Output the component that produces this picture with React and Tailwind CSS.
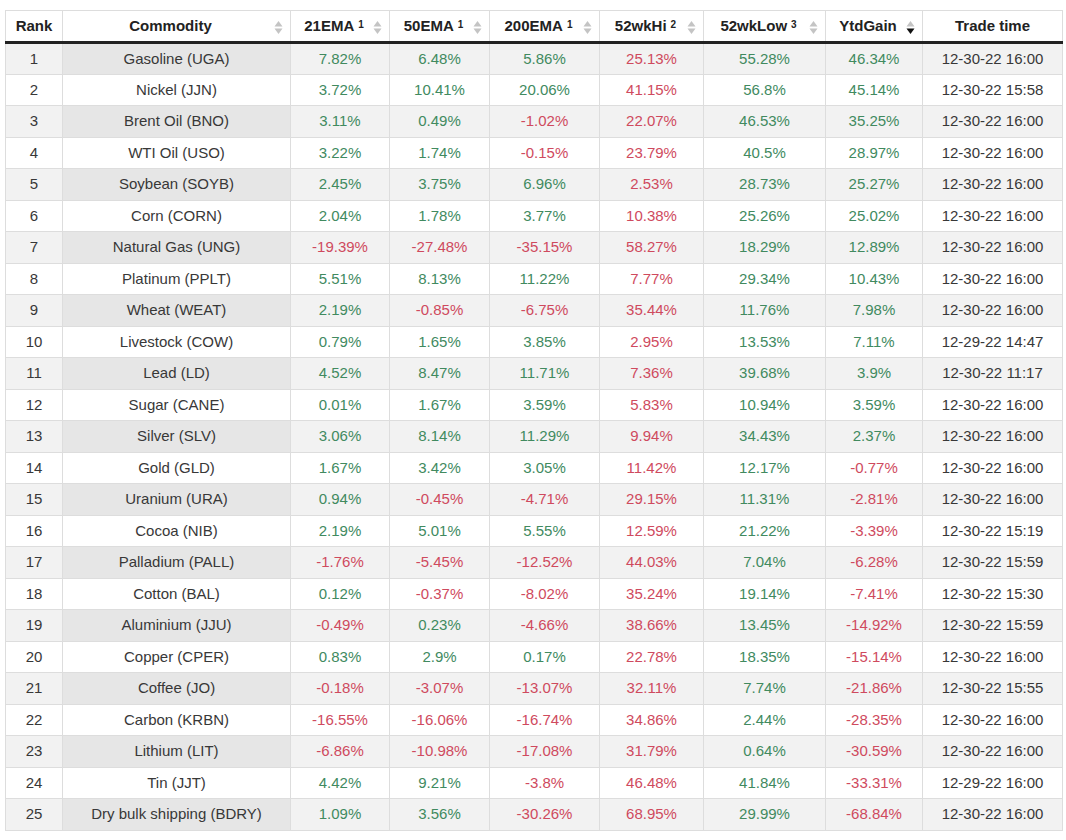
import React from "react";

const rows = [
  ["Gasoline (UGA)", "7.82%", "6.48%", "5.86%", "25.13%", "55.28%", "46.34%", "12-30-22 16:00"],
  ["Nickel (JJN)", "3.72%", "10.41%", "20.06%", "41.15%", "56.8%", "45.14%", "12-30-22 15:58"],
  ["Brent Oil (BNO)", "3.11%", "0.49%", "-1.02%", "22.07%", "46.53%", "35.25%", "12-30-22 16:00"],
  ["WTI Oil (USO)", "3.22%", "1.74%", "-0.15%", "23.79%", "40.5%", "28.97%", "12-30-22 16:00"],
  ["Soybean (SOYB)", "2.45%", "3.75%", "6.96%", "2.53%", "28.73%", "25.27%", "12-30-22 16:00"],
  ["Corn (CORN)", "2.04%", "1.78%", "3.77%", "10.38%", "25.26%", "25.02%", "12-30-22 16:00"],
  ["Natural Gas (UNG)", "-19.39%", "-27.48%", "-35.15%", "58.27%", "18.29%", "12.89%", "12-30-22 16:00"],
  ["Platinum (PPLT)", "5.51%", "8.13%", "11.22%", "7.77%", "29.34%", "10.43%", "12-30-22 16:00"],
  ["Wheat (WEAT)", "2.19%", "-0.85%", "-6.75%", "35.44%", "11.76%", "7.98%", "12-30-22 16:00"],
  ["Livestock (COW)", "0.79%", "1.65%", "3.85%", "2.95%", "13.53%", "7.11%", "12-29-22 14:47"],
  ["Lead (LD)", "4.52%", "8.47%", "11.71%", "7.36%", "39.68%", "3.9%", "12-30-22 11:17"],
  ["Sugar (CANE)", "0.01%", "1.67%", "3.59%", "5.83%", "10.94%", "3.59%", "12-30-22 16:00"],
  ["Silver (SLV)", "3.06%", "8.14%", "11.29%", "9.94%", "34.43%", "2.37%", "12-30-22 16:00"],
  ["Gold (GLD)", "1.67%", "3.42%", "3.05%", "11.42%", "12.17%", "-0.77%", "12-30-22 16:00"],
  ["Uranium (URA)", "0.94%", "-0.45%", "-4.71%", "29.15%", "11.31%", "-2.81%", "12-30-22 16:00"],
  ["Cocoa (NIB)", "2.19%", "5.01%", "5.55%", "12.59%", "21.22%", "-3.39%", "12-30-22 15:19"],
  ["Palladium (PALL)", "-1.76%", "-5.45%", "-12.52%", "44.03%", "7.04%", "-6.28%", "12-30-22 15:59"],
  ["Cotton (BAL)", "0.12%", "-0.37%", "-8.02%", "35.24%", "19.14%", "-7.41%", "12-30-22 15:30"],
  ["Aluminium (JJU)", "-0.49%", "0.23%", "-4.66%", "38.66%", "13.45%", "-14.92%", "12-30-22 15:59"],
  ["Copper (CPER)", "0.83%", "2.9%", "0.17%", "22.78%", "18.35%", "-15.14%", "12-30-22 16:00"],
  ["Coffee (JO)", "-0.18%", "-3.07%", "-13.07%", "32.11%", "7.74%", "-21.86%", "12-30-22 15:55"],
  ["Carbon (KRBN)", "-16.55%", "-16.06%", "-16.74%", "34.86%", "2.44%", "-28.35%", "12-30-22 16:00"],
  ["Lithium (LIT)", "-6.86%", "-10.98%", "-17.08%", "31.79%", "0.64%", "-30.59%", "12-30-22 16:00"],
  ["Tin (JJT)", "4.42%", "9.21%", "-3.8%", "46.48%", "41.84%", "-33.31%", "12-29-22 16:00"],
  ["Dry bulk shipping (BDRY)", "1.09%", "3.56%", "-30.26%", "68.95%", "29.99%", "-68.84%", "12-30-22 16:00"],
];

const SortIcon = ({ desc }) => (
  <svg width="9" height="15" viewBox="0 0 9 15" className="absolute right-[7px] top-[9px]">
    <path d="M4.5 1 L8.5 6.5 L0.5 6.5 Z" fill="#c4c4c4" />
    <path d="M0.5 8.5 L8.5 8.5 L4.5 14 Z" fill={desc ? "#111" : "#c4c4c4"} />
  </svg>
);

const headers = [
  { label: "Rank", w: "w-[57px]" },
  { label: "Commodity", w: "w-[228px]", sort: true },
  { label: "21EMA", sup: "1", w: "w-[99px]", sort: true },
  { label: "50EMA", sup: "1", w: "w-[100px]", sort: true },
  { label: "200EMA", sup: "1", w: "w-[110px]", sort: true },
  { label: "52wkHi", sup: "2", w: "w-[104px]", sort: true },
  { label: "52wkLow", sup: "3", w: "w-[122px]", sort: true },
  { label: "YtdGain", w: "w-[97px]", sort: true, desc: true },
  { label: "Trade time", w: "w-[140px]" },
];

// 52wkHi is always shown red, the rest go by sign
const tone = (v, col) => {
  if (col === 4) return "text-[#cf4a5e]";
  return v.startsWith("-") ? "text-[#cf4a5e]" : "text-[#418a5f]";
};

export default function App() {
  return (
    <div className="bg-white w-[1066px] h-[840px] pt-[10px] pl-[5px] font-['Liberation_Sans',Arial,sans-serif] text-[15px] text-[#383838]">
      <table className="table-fixed border-collapse w-[1057px] border border-[#ddd]">
        <thead>
          <tr>
            {headers.map((h) => (
              <th
                key={h.label}
                className={`${h.w} relative h-[32px] p-0 border-x border-[#ddd] border-b-[3px] border-b-[#222] font-bold text-[#222] text-center ${h.sort ? "pr-[12px]" : ""}`}
              >
                {h.label}
                {h.sup && <sup className="text-[10px] ml-[4px] relative top-[-3px]">{h.sup}</sup>}
                {h.sort && <SortIcon desc={h.desc} />}
              </th>
            ))}
          </tr>
        </thead>
        <tbody>
          {rows.map((r, i) => {
            const odd = i % 2 === 0;
            return (
              <tr key={r[0]} className={odd ? "bg-[#f2f2f2]" : "bg-white"}>
                <td className="h-[31.5px] p-0 text-center border border-[#ddd]">{i + 1}</td>
                <td className={`p-0 text-center border border-[#ddd] ${odd ? "bg-[#e6e6e6]" : "bg-white"}`}>{r[0]}</td>
                {r.slice(1, 7).map((v, c) => (
                  <td key={c} className={`p-0 text-center border border-[#ddd] ${tone(v, c + 1)}`}>
                    {v}
                  </td>
                ))}
                <td className="p-0 text-center border border-[#ddd]">{r[7]}</td>
              </tr>
            );
          })}
        </tbody>
      </table>
    </div>
  );
}
